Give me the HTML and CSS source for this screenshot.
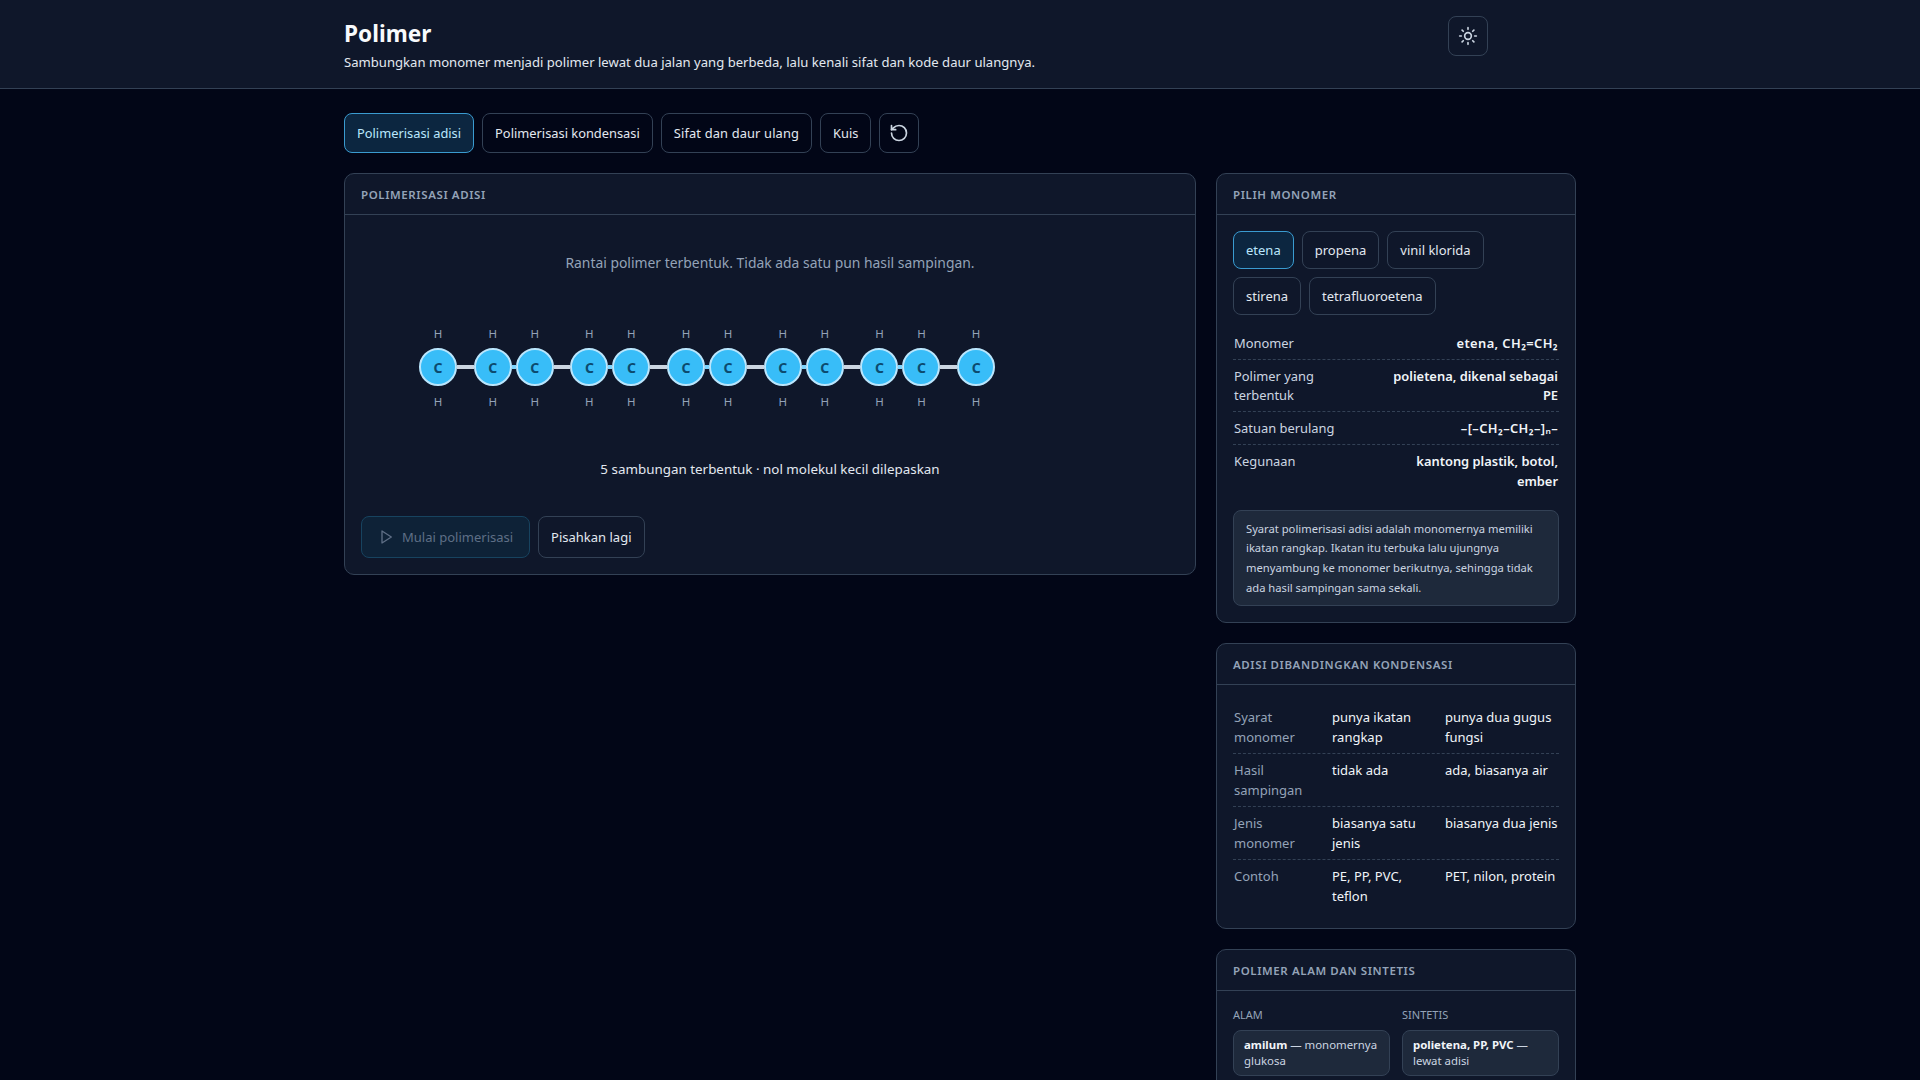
FILE: index.html
```html
<!DOCTYPE html>
<html>
<head>
<meta charset="utf-8">
<title>Polimer</title>
<link rel="stylesheet" href="styles.css">
</head>
<body>
<header class="top">
  <div class="top-inner">
    <div>
      <h1>Polimer</h1>
      <p class="lead">Sambungkan monomer menjadi polimer lewat dua jalan yang berbeda, lalu kenali sifat dan kode daur ulangnya.</p>
    </div>
    <button class="btn icon-btn">
      <svg width="20" height="20" viewBox="0 0 24 24" fill="none" stroke="currentColor" stroke-width="2" stroke-linecap="round" stroke-linejoin="round"><circle cx="12" cy="12" r="4"/><path d="M12 2v2M12 20v2M4.93 4.93l1.41 1.41M17.66 17.66l1.41 1.41M2 12h2M20 12h2M6.34 17.66l-1.41 1.41M19.07 4.93l-1.41 1.41"/></svg>
    </button>
  </div>
</header>

<div class="wrap">
  <nav class="tabs">
    <button class="btn active">Polimerisasi adisi</button>
    <button class="btn">Polimerisasi kondensasi</button>
    <button class="btn tab-wide">Sifat dan daur ulang</button>
    <button class="btn">Kuis</button>
    <button class="btn icon-btn">
      <svg width="20" height="20" viewBox="0 0 24 24" fill="none" stroke="currentColor" stroke-width="2" stroke-linecap="round" stroke-linejoin="round"><path d="M3 12a9 9 0 1 0 9-9 9.75 9.75 0 0 0-6.74 2.74L3 8"/><path d="M3 3v5h5"/></svg>
    </button>
  </nav>

  <div class="layout">
    <section class="panel main-panel">
      <div class="panel-head">POLIMERISASI ADISI</div>
      <div class="panel-body">
        <p class="hint">Rantai polimer terbentuk. Tidak ada satu pun hasil sampingan.</p>
        <div class="chain">
          <div class="unit"><div class="col"><span>H</span><b class="atom">C</b><span>H</span></div><i class="bond"></i><div class="col"><span>H</span><b class="atom">C</b><span>H</span></div></div>
          <i class="join"></i>
          <div class="unit"><div class="col"><span>H</span><b class="atom">C</b><span>H</span></div><i class="bond"></i><div class="col"><span>H</span><b class="atom">C</b><span>H</span></div></div>
          <i class="join"></i>
          <div class="unit"><div class="col"><span>H</span><b class="atom">C</b><span>H</span></div><i class="bond"></i><div class="col"><span>H</span><b class="atom">C</b><span>H</span></div></div>
          <i class="join"></i>
          <div class="unit"><div class="col"><span>H</span><b class="atom">C</b><span>H</span></div><i class="bond"></i><div class="col"><span>H</span><b class="atom">C</b><span>H</span></div></div>
          <i class="join"></i>
          <div class="unit"><div class="col"><span>H</span><b class="atom">C</b><span>H</span></div><i class="bond"></i><div class="col"><span>H</span><b class="atom">C</b><span>H</span></div></div>
          <i class="join"></i>
          <div class="unit"><div class="col"><span>H</span><b class="atom">C</b><span>H</span></div><i class="bond"></i><div class="col"><span>H</span><b class="atom">C</b><span>H</span></div></div>
        </div>
        <p class="status">5 sambungan terbentuk · nol molekul kecil dilepaskan</p>
        <div class="actions">
          <button class="btn primary" disabled>
            <svg width="16" height="16" viewBox="0 0 24 24" fill="none" stroke="currentColor" stroke-width="2" stroke-linecap="round" stroke-linejoin="round"><polygon points="6 3 20 12 6 21 6 3"/></svg>
            Mulai polimerisasi
          </button>
          <button class="btn">Pisahkan lagi</button>
        </div>
      </div>
    </section>

    <aside class="side">
      <section class="panel">
        <div class="panel-head">PILIH MONOMER</div>
        <div class="panel-body">
          <div class="chips">
            <button class="btn chip active">etena</button>
            <button class="btn chip">propena</button>
            <button class="btn chip">vinil klorida</button>
            <button class="btn chip">stirena</button>
            <button class="btn chip">tetrafluoroetena</button>
          </div>
          <div class="facts">
            <div class="fact"><span>Monomer</span><b class="formula">etena, CH₂=CH₂</b></div>
            <div class="fact"><span>Polimer yang terbentuk</span><b>polietena, dikenal sebagai PE</b></div>
            <div class="fact"><span>Satuan berulang</span><b class="formula">–[–CH₂–CH₂–]ₙ–</b></div>
            <div class="fact"><span>Kegunaan</span><b>kantong plastik, botol, ember</b></div>
          </div>
          <p class="note">Syarat polimerisasi adisi adalah monomernya memiliki ikatan rangkap. Ikatan itu terbuka lalu ujungnya menyambung ke monomer berikutnya, sehingga tidak ada hasil sampingan sama sekali.</p>
        </div>
      </section>

      <section class="panel">
        <div class="panel-head">ADISI DIBANDINGKAN KONDENSASI</div>
        <div class="panel-body">
          <div class="cmp"><span>Syarat monomer</span><div>punya ikatan rangkap</div><div>punya dua gugus fungsi</div></div>
          <div class="cmp"><span>Hasil sampingan</span><div>tidak ada</div><div>ada, biasanya air</div></div>
          <div class="cmp"><span>Jenis monomer</span><div>biasanya satu jenis</div><div>biasanya dua jenis</div></div>
          <div class="cmp"><span>Contoh</span><div>PE, PP, PVC, teflon</div><div>PET, nilon, protein</div></div>
        </div>
      </section>

      <section class="panel">
        <div class="panel-head">POLIMER ALAM DAN SINTETIS</div>
        <div class="panel-body origin">
          <div>
            <div class="origin-title">ALAM</div>
            <div class="origin-card"><b>amilum</b> — monomernya glukosa</div>
          </div>
          <div>
            <div class="origin-title">SINTETIS</div>
            <div class="origin-card"><b>polietena, PP, PVC</b> — lewat adisi</div>
          </div>
        </div>
      </section>
    </aside>
  </div>
</div>
</body>
</html>
```

FILE: styles.css
```css
* {
  box-sizing: border-box;
}
body {
  margin: 0;
  background: #020617;
  color: #e2e8f0;
  font-family: "Noto Sans", sans-serif;
  font-size: 13px;
}
.top {
  height: 89px;
  background: #0f172a;
  border-bottom: 1px solid #334155;
}
.top-inner {
  width: 1144px;
  margin-left: 344px;
  padding-top: 16px;
  display: flex;
  justify-content: space-between;
  align-items: flex-start;
}
h1 {
  margin: 3px 0 0;
  font-size: 22.6px;
  line-height: 30px;
  font-weight: 700;
  color: #f8fafc;
}
.lead {
  margin: 3px 0 0;
  font-size: 13.1px;
  line-height: 20px;
  color: #e2e8f0;
}
.wrap {
  width: 1232px;
  margin-left: 344px;
  padding-top: 24px;
}
.btn {
  font-family: inherit;
  font-size: 12.85px;
  color: #e2e8f0;
  background: transparent;
  border: 1px solid #334155;
  border-radius: 8px;
  height: 40px;
  padding: 0 12px;
  display: inline-flex;
  align-items: center;
  justify-content: center;
  gap: 8px;
}
.icon-btn {
  width: 40px;
  padding: 0;
  color: #cbd5e1;
}
.btn.active {
  background: #0c2640;
  border-color: #3a9bd0;
  color: #bae6fd;
}
.tab-wide {
  letter-spacing: 0.15px;
}
.tabs {
  display: flex;
  gap: 8px;
  margin-bottom: 20px;
}
.layout {
  display: grid;
  grid-template-columns: 852px 360px;
  gap: 20px;
  align-items: start;
}
.side {
  display: flex;
  flex-direction: column;
  gap: 20px;
}
.panel {
  background: #0f172a;
  border: 1px solid #334155;
  border-radius: 10px;
}
.panel-head {
  height: 41px;
  padding: 0 16px;
  display: flex;
  align-items: center;
  border-bottom: 1px solid #334155;
  font-size: 11.5px;
  font-weight: 600;
  letter-spacing: 0.6px;
  color: #94a3b8;
}
.panel-body {
  padding: 16px;
}
.hint {
  margin: 21px 0 0;
  text-align: center;
  font-size: 13.9px;
  line-height: 22px;
  color: #94a3b8;
}
.chain {
  display: flex;
  margin: 53px 0 0 58px;
}
.unit {
  display: flex;
}
.col {
  width: 38px;
  display: flex;
  flex-direction: column;
  align-items: center;
  font-size: 11.5px;
  color: #94a3b8;
}
.col span {
  height: 14px;
  line-height: 14px;
}
.atom {
  width: 38px;
  height: 38px;
  border-radius: 50%;
  background: #38bdf8;
  border: 2px solid #bae6fd;
  color: #0c4a6e;
  display: flex;
  align-items: center;
  justify-content: center;
  font-size: 14px;
  font-weight: 700;
}
.col span:first-child {
  margin-bottom: 7px;
}
.col span:last-child {
  margin-top: 9px;
}
.bond {
  width: 16.7px;
  height: 4px;
  margin-top: 38px;
  background: #cbd5e1;
}
.join {
  width: 4px;
  height: 4px;
  margin-top: 38px;
  background: #7dd3fc;
}
.status {
  margin: 50px 0 0;
  text-align: center;
  font-size: 13.4px;
  line-height: 20px;
  color: #e2e8f0;
}
.actions {
  display: flex;
  gap: 8px;
  margin-top: 37px;
}
.actions .btn {
  height: 42px;
  font-size: 13px;
}
.btn.primary {
  padding: 0 16px;
  background: #0e2237;
  border-color: #17435f;
  color: #5f6f86;
}
.chips {
  display: flex;
  flex-wrap: wrap;
  gap: 8px;
}
.chip {
  height: 38px;
  font-size: 13px;
}
.facts {
  margin-top: 12px;
}
.fact {
  display: flex;
  justify-content: space-between;
  gap: 16px;
  padding: 7px 1px 5px 0;
  border-bottom: 1px dashed #334155;
  font-size: 12.9px;
  line-height: 19.7px;
}
.fact:last-child {
  border-bottom: 0;
}
.fact span {
  color: #cbd5e1;
  flex: none;
  width: 110px;
  padding-left: 1px;
}
.fact b {
  max-width: 175px;
  text-align: right;
  font-weight: 600;
  color: #f1f5f9;
}
.fact .formula {
  letter-spacing: 0.4px;
}
.note {
  margin: 13.5px 0 0;
  padding: 8px 12px;
  background: #1e293b;
  border: 1px solid #334155;
  border-radius: 8px;
  font-size: 11.2px;
  line-height: 19.6px;
  color: #cbd5e1;
}
.cmp {
  display: grid;
  grid-template-columns: 99px 113px 1fr;
  padding: 6px 0;
  border-bottom: 1px dashed #334155;
  font-size: 13px;
  line-height: 20px;
  color: #f1f5f9;
}
.cmp:last-child {
  border-bottom: 0;
}
.cmp span {
  color: #94a3b8;
  padding: 0 10px 0 1px;
}
.cmp div {
  padding-right: 6px;
}
.cmp div:last-child {
  padding-right: 0;
}
.origin {
  display: grid;
  grid-template-columns: 157px 157px;
  gap: 12px;
}
.origin-title {
  font-size: 11px;
  line-height: 16px;
  color: #94a3b8;
  margin-bottom: 7px;
}
.origin-card {
  background: #1e293b;
  border: 1px solid #334155;
  border-radius: 8px;
  padding: 6px 10px;
  font-size: 11.4px;
  line-height: 16px;
  color: #cbd5e1;
}
.origin-card b {
  color: #f1f5f9;
  font-weight: 700;
}
```
